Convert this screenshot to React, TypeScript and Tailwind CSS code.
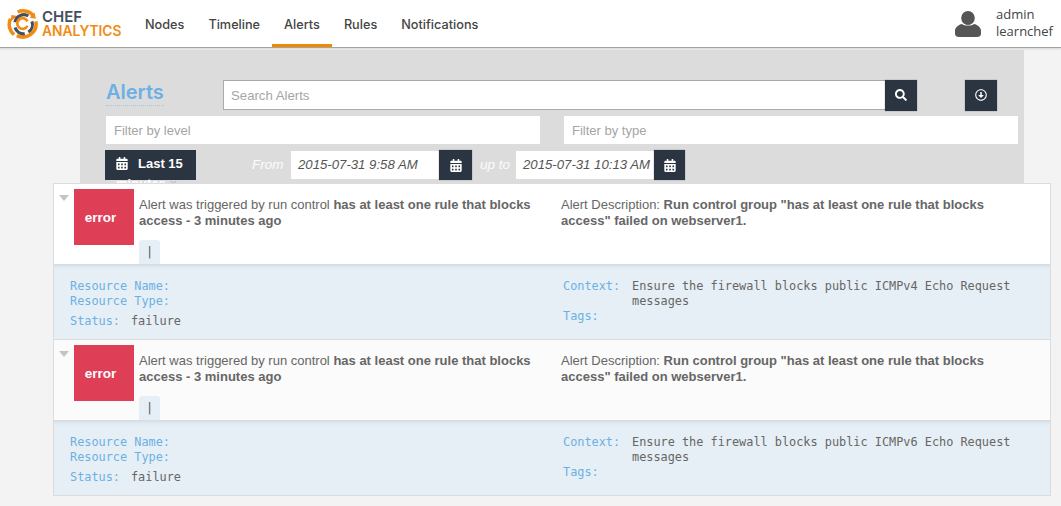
import { FaCalendarAlt, FaRegArrowAltCircleDown, FaSearch } from "react-icons/fa"

const navItems = ["Nodes", "Timeline", "Alerts", "Rules", "Notifications"]

const alerts = [
  { id: 1, icmp: "ICMPv4", rowBg: "bg-white" },
  { id: 2, icmp: "ICMPv6", rowBg: "bg-[#fbfbfb]" },
]

function Logo() {
  return (
    <svg width="32" height="32" viewBox="0 0 36 36" fill="none" className="shrink-0">
      <path d="M12 4.5 A15 15 0 0 1 30 9" stroke="#f18b13" strokeWidth="4" />
      <path d="M31 5 L32.5 12 L25.5 11 Z" fill="#f18b13" />
      <path d="M32.5 15 A15 15 0 0 1 11 31" stroke="#f18b13" strokeWidth="4" />
      <path d="M8 30 A15 15 0 0 1 4 12" stroke="#f18b13" strokeWidth="4" />
      <path d="M5 8 L12 9 L4 15 Z" fill="#f18b13" />
      <path d="M9 16 A10 10 0 0 1 24 9" stroke="#42505e" strokeWidth="3.5" />
      <path d="M28 15 A10 10 0 0 1 24 27" stroke="#42505e" strokeWidth="3.5" />
      <path d="M20 29 A10 10 0 0 1 9 22" stroke="#42505e" strokeWidth="3.5" />
      <path d="M23 20 A6 6 0 1 1 23 15" stroke="#f18b13" strokeWidth="3" />
    </svg>
  )
}

function UserIcon() {
  return (
    <svg width="26" height="26" viewBox="0 0 26 26" fill="#555" className="shrink-0 mr-[15px]">
      <ellipse cx="13" cy="7" rx="6.8" ry="7" />
      <path d="M0 20 C0 16 4 13.5 7 13 C9 15 17 15 19 13 C22 13.5 26 16 26 20 L26 23 C26 25 24 26 22 26 L4 26 C2 26 0 25 0 23 Z" />
    </svg>
  )
}

function Header() {
  return (
    <header className="h-[48px] bg-white border-b border-[#a3a3a3] flex items-center shadow-[0_1px_2px_rgba(0,0,0,0.12)] relative z-10">
      <div className="w-[133px] pl-[7px] flex items-center gap-[3px] shrink-0">
        <Logo />
        <div className="font-['Inter',sans-serif] font-semibold leading-[14.5px] pt-[1px]">
          <div className="text-[#42505e] text-[15px]">CHEF</div>
          <div className="text-[#f18b13] text-[13.8px]">ANALYTICS</div>
        </div>
      </div>
      <nav className="flex h-full">
        {navItems.map((item) => (
          <a
            key={item}
            className={
              "px-3 h-full flex items-center pt-[5px] text-[12.7px] font-medium text-[#444] font-['Inter',sans-serif] border-b-[3px] " +
              (item === "Alerts" ? "border-[#ef8a00]" : "border-transparent")
            }
          >
            {item}
          </a>
        ))}
      </nav>
      <div className="ml-auto flex items-center pr-[8px]">
        <UserIcon />
        <div className="text-[13px] leading-[17px] text-[#444] font-['Open_Sans',sans-serif] -mt-[2px]">
          <div>admin</div>
          <div>learnchef</div>
        </div>
      </div>
    </header>
  )
}

function DarkButton({ children, className }: { children: React.ReactNode; className?: string }) {
  return (
    <button className={"bg-[#2b3541] text-white flex items-center justify-center shrink-0 shadow-[0_0_1px_rgba(0,0,0,0.5)] " + (className ?? "")}>
      {children}
    </button>
  )
}

function DateField({ value, width, buttonWidth }: { value: string; width: string; buttonWidth: string }) {
  return (
    <div className="flex items-center shrink-0">
      <div className={"h-[28px] bg-white px-[7px] flex items-center whitespace-nowrap text-[13.2px] italic text-[#555] " + width}>{value}</div>
      <DarkButton className={"h-[30px] " + buttonWidth}>
        <FaCalendarAlt className="w-[12px] h-[13px]" />
      </DarkButton>
    </div>
  )
}

function Filters() {
  return (
    <section className="ml-[80px] w-[944px] mt-[2px] h-[133px] overflow-hidden bg-[#dcdcdc] pl-[26px] pt-[30px]">
      <div className="flex items-center h-[30px]">
        <h1 className="w-[117px] shrink-0 text-[20px] leading-[24px] font-semibold text-[#6cb0e4] font-['Inter',sans-serif] -mt-[6px]">
          <span className="border-b border-dotted border-[#9cc8ea] pb-[1px]">Alerts</span>
        </h1>
        <input
          placeholder="Search Alerts"
          className="w-[662px] shrink-0 h-[30px] bg-white border border-[#aaa] border-r-0 px-[7px] text-[13.2px] placeholder:text-[#a5a5a5] outline-none"
        />
        <DarkButton className="w-[32px] h-[31px]">
          <FaSearch className="w-[12px] h-[12px]" />
        </DarkButton>
        <DarkButton className="w-[32px] h-[31px] ml-[48px]">
          <FaRegArrowAltCircleDown className="w-[12px] h-[12px]" />
        </DarkButton>
      </div>
      <div className="flex gap-[24px] mt-[6px]">
        <input
          placeholder="Filter by level"
          className="w-[434px] shrink-0 h-[28px] bg-white px-[8px] text-[13px] placeholder:text-[#a5a5a5] outline-none"
        />
        <input
          placeholder="Filter by type"
          className="w-[454px] shrink-0 h-[28px] bg-white px-[8px] text-[13px] placeholder:text-[#a5a5a5] outline-none"
        />
      </div>
      <div className="flex items-start mt-[6px] -ml-[1px]">
        <div className="w-[91px] h-[30px] bg-[#2b3541] text-white text-[13px] font-bold leading-[20px] pt-[4px] pl-[11px] shrink-0">
          <FaCalendarAlt className="inline-block w-[12px] h-[13px] mr-[10px] -mt-[2px]" />
          Last 15 minutes <span className="text-[#bbb] font-normal">×</span>
        </div>
        <span className="ml-[56px] mr-[8px] w-[31px] text-[13.5px] leading-[30px] italic text-white/90 shrink-0">From</span>
        <DateField value="2015-07-31 9:58 AM" width="w-[148px]" buttonWidth="w-[33px]" />
        <span className="ml-[8px] mr-[7px] w-[29px] text-[13.5px] leading-[30px] italic text-white/90 whitespace-nowrap shrink-0">up to</span>
        <DateField value="2015-07-31 10:13 AM" width="w-[138px]" buttonWidth="w-[31px]" />
      </div>
    </section>
  )
}

function Label({ children }: { children: React.ReactNode }) {
  return <span className="text-[#6cb0e4]">{children}</span>
}

function AlertRow({ icmp, rowBg }: { icmp: string; rowBg: string }) {
  return (
    <article>
      <div className={"h-[80px] flex pt-[5px] relative " + rowBg}>
        <div className="w-[20px] pl-[5px] pt-[6px] shrink-0">
          <div className="w-0 h-0 border-x-[5.5px] border-x-transparent border-t-[6px] border-t-[#c4c4c4]" />
        </div>
        <div className="w-[60px] h-[56px] bg-[#de3e56] text-white text-[13.5px] font-bold flex items-center justify-center pr-[7px] pt-[2px] shrink-0">
          error
        </div>
        <div className="w-[422px] ml-[5px] shrink-0 relative">
          <p className="text-[13px] leading-[16px] text-[#666] pt-[8px]">
            Alert was triggered by run control <b>has at least one rule that blocks access - 3 minutes ago</b>
          </p>
          <div className="absolute left-0 top-[51px] w-[21px] h-[24px] bg-[#e6eff5] rounded-t-[3px] text-[#555] text-[12px] flex items-center justify-center font-['DejaVu_Sans_Mono',monospace]">
            |
          </div>
        </div>
        <p className="w-[440px] text-[13px] leading-[16px] text-[#666] pt-[8px]">
          Alert Description: <b>Run control group "has at least one rule that blocks access" failed on webserver1.</b>
        </p>
      </div>
      <div className="h-[76px] bg-[#e6eff5] border-b border-[#dcdcdc] shadow-[inset_0_5px_5px_-4px_rgba(60,80,100,0.18)] flex pl-[16px] pt-[15px] text-[11.87px] leading-[15px] text-[#666] font-['DejaVu_Sans_Mono',monospace] whitespace-pre">
        <div className="w-[493px] shrink-0">
          <div><Label>Resource Name:</Label></div>
          <div><Label>Resource Type:</Label></div>
          <div className="mt-[5px]"><Label>Status:</Label><span className="ml-[11px]">failure</span></div>
        </div>
        <div>
          <div className="flex">
            <div className="w-[69px]"><Label>Context:</Label></div>
            <div className="w-[390px] whitespace-normal">Ensure the firewall blocks public {icmp} Echo Request messages</div>
          </div>
          <div><Label>Tags:</Label></div>
        </div>
      </div>
    </article>
  )
}

export default function App() {
  return (
    <div className="min-h-[506px] bg-[#f3f3f3] font-['Liberation_Sans',sans-serif] overflow-hidden">
      <Header />
      <Filters />
      <div className="ml-[53px] w-[998px] border border-[#dcdcdc] border-b-0 relative">
        {alerts.map((a) => (
          <AlertRow key={a.id} icmp={a.icmp} rowBg={a.rowBg} />
        ))}
      </div>
    </div>
  )
}
